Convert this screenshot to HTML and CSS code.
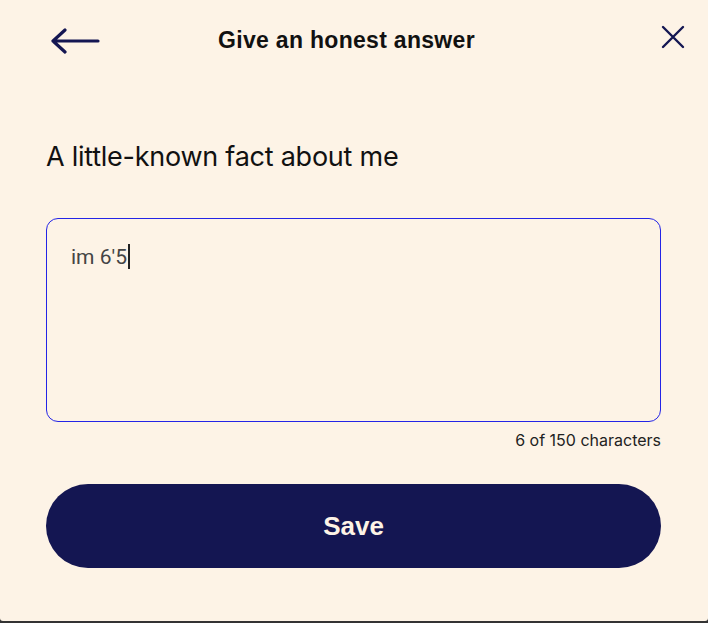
FILE: index.html
```html
<!DOCTYPE html>
<html lang="en">
<head>
    <meta charset="UTF-8">
    <meta name="viewport" content="width=device-width, initial-scale=1.0">
    <title>Give an honest answer</title>
    <link rel="stylesheet" href="styles.css">
</head>
<body>

<div class="panel">
    <!-- Header -->
    <div class="header">
        <button class="icon-btn back" aria-label="Back">
            <svg width="50" height="26" viewBox="0 0 50 26">
                <path d="M2 13 H47 M14 2 L2 13 L14 24" fill="none" stroke="#141652" stroke-width="3.2" stroke-linecap="round" stroke-linejoin="round"/>
            </svg>
        </button>
        <h1 class="title">Give an honest answer</h1>
        <button class="icon-btn close" aria-label="Close">
            <svg width="26" height="26" viewBox="0 0 26 26">
                <path d="M3 3 L23 23 M23 3 L3 23" fill="none" stroke="#141652" stroke-width="2.4" stroke-linecap="round"/>
            </svg>
        </button>
    </div>

    <!-- Prompt form -->
    <form class="prompt-form">
        <h2 class="prompt">A little-known fact about me</h2>
        <div class="answer-box">
            <span class="answer-text">im 6'5</span><span class="caret"></span>
        </div>
        <div class="counter">6 of 150 characters</div>
        <button type="button" class="save-btn">Save</button>
    </form>
</div>

</body>
</html>
```

FILE: styles.css
```css
        body {
            margin: 0;
            padding: 0;
            background-color: #333;
            font-family: Inter, "Liberation Sans", sans-serif;
            color: #111;
        }

        .panel {
            height: 621px;
            background-color: #fdf3e6;
            border-radius: 0 0 3px 3px;
            padding: 0 47px 0 46px;
        }

        .header {
            display: grid;
            grid-template-columns: 1fr auto 1fr;
            align-items: center;
            height: 80px;
        }

        .icon-btn {
            background: none;
            border: none;
            padding: 0;
            cursor: pointer;
            display: flex;
        }

        .back {
            margin-left: 5px;
            margin-top: 1px;
            justify-self: start;
        }

        .close {
            justify-self: end;
            margin-right: -25px;
            margin-top: -6px;
        }

        .title {
            margin: 0 14px 0 0;
            font-family: "Liberation Sans", Arial, sans-serif;
            font-size: 23px;
            font-weight: 700;
            letter-spacing: 0.3px;
            color: #111;
        }

        .prompt-form {
            padding-top: 57px;
        }

        .prompt {
            margin: 0;
            font-size: 27px;
            font-weight: 400;
            letter-spacing: -0.25px;
            line-height: 40px;
            color: #111;
        }

        .answer-box {
            margin-top: 41px;
            height: 177px;
            border: 1px solid #2424e6;
            border-radius: 12px;
            padding: 25px 24px 0 24px;
            display: flex;
            align-items: flex-start;
        }

        .answer-text {
            font-family: Roboto, "Liberation Sans", sans-serif;
            font-size: 21px;
            line-height: 26px;
            color: #444;
        }

        .caret {
            display: inline-block;
            width: 2px;
            height: 25px;
            margin-left: 1px;
            background-color: #222;
        }

        .counter {
            text-align: right;
            font-size: 16px;
            margin-top: 8px;
            color: #222;
        }

        .save-btn {
            display: block;
            width: 100%;
            height: 84px;
            margin-top: 34px;
            border: none;
            border-radius: 42px;
            background-color: #141652;
            color: #fdf3e6;
            font-family: "Liberation Sans", Arial, sans-serif;
            font-size: 26px;
            font-weight: 700;
            cursor: pointer;
        }
```
